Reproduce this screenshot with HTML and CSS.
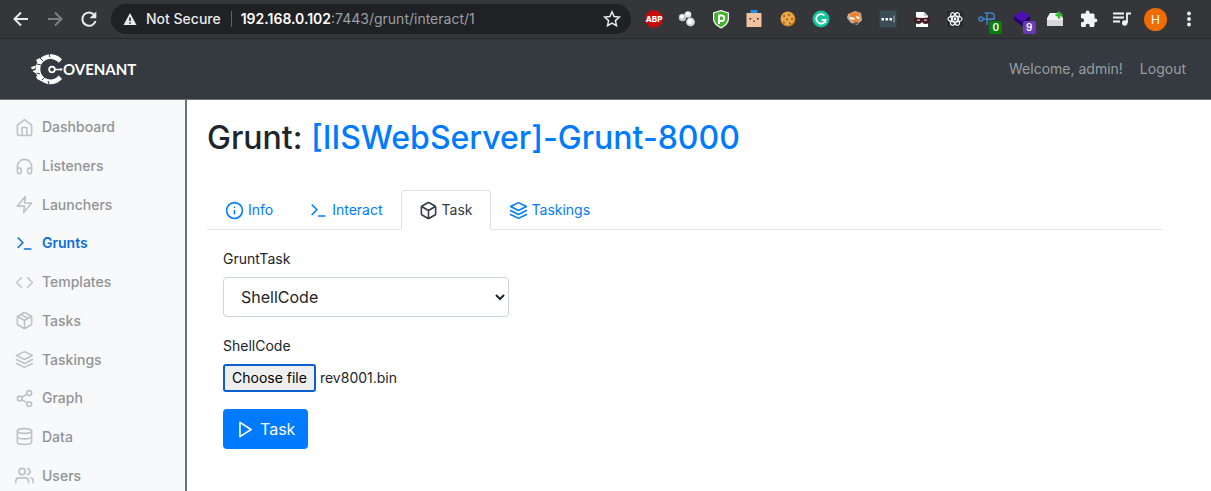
FILE: index.html
```
<!DOCTYPE html>
<html lang="en">
<head>
<meta charset="utf-8">
<title>Covenant</title>
<link rel="stylesheet" href="styles.css">
</head>
<body>
<svg class="sprite" aria-hidden="true">
  <symbol id="terminal" viewBox="0 0 24 24"><path d="M4 17l6-6-6-6M12 19h8"/></symbol>
  <symbol id="box" viewBox="0 0 24 24"><path d="M21 16V8a2 2 0 0 0-1-1.73l-7-4a2 2 0 0 0-2 0l-7 4A2 2 0 0 0 3 8v8a2 2 0 0 0 1 1.73l7 4a2 2 0 0 0 2 0l7-4A2 2 0 0 0 21 16zM3.27 6.96L12 12.01l8.73-5.05M12 22.08V12"/></symbol>
  <symbol id="layers" viewBox="0 0 24 24"><path d="M12 2L2 7l10 5 10-5-10-5zM2 17l10 5 10-5M2 12l10 5 10-5"/></symbol>
</svg>

<div class="browser">
  <div class="browser-nav">
    <button class="tool" aria-label="Back"><svg viewBox="0 0 20 20"><path d="M17 10H4M10 3.500l-6.500 6.500 6.500 6.500"/></svg></button>
    <button class="tool dim" aria-label="Forward"><svg viewBox="0 0 20 20"><path d="M3 10h13M10 3.500l6.500 6.500-6.500 6.500"/></svg></button>
    <button class="tool" aria-label="Reload"><svg viewBox="0 0 20 20"><path d="M15.500 6.200A6.700 6.700 0 1 0 16.500 12"/><path class="solid" d="M17.300 2.500v6.700h-6.700z"/></svg></button>
  </div>
  <div class="address">
    <svg class="warn" viewBox="0 0 14 14"><path fill="#e8eaed" d="M7 1l6.500 12H.5z"/><path stroke="#202124" stroke-width="1.500" d="M7 5.500v3.500M7 10.200v1.500"/></svg>
    <span class="secure">Not Secure</span>
    <span class="url"><b>192.168.0.102</b>:7443/grunt/interact/1</span>
    <button class="star" aria-label="Bookmark"><svg viewBox="0 0 20 20"><path stroke-width="1.500" d="M10 2.800l2.100 4.800 5.200.5-3.900 3.500 1.100 5.100L10 14l-4.500 2.700 1.100-5.100-3.900-3.500 5.200-.5z"/></svg></button>
  </div>
  <div class="extensions">
    <span class="ext"><svg viewBox="0 0 24 24"><path fill="#c70d0c" d="M8.500 3.500h7l5 5v7l-5 5h-7l-5-5v-7z"/><text x="12" y="15" class="abp">ABP</text></svg></span>
    <span class="ext"><svg viewBox="0 0 24 24"><circle cx="7.500" cy="10.500" r="3.700" fill="#c5c7c8"/><circle cx="13" cy="7.500" r="3.300" fill="#e1e1e1"/><circle cx="15.500" cy="15" r="4.400" fill="#d6d7d8"/><circle cx="7" cy="9.700" r="2" fill="#fff"/><circle cx="13" cy="7" r="1.800" fill="#fff"/><circle cx="15" cy="14.500" r="2.500" fill="#fff"/></svg></span>
    <span class="ext"><svg viewBox="0 0 24 24"><path fill="#fff" d="M12 3l8 2.500v6c0 5-4 8-8 10-4-2-8-5-8-10v-6z"/><path fill="#43b02a" d="M12 4.300l6.800 2v5.200c0 4-3.300 6.800-6.800 8.600-3.500-1.800-6.800-4.600-6.800-8.600V6.300z"/><path fill="none" stroke="#fff" stroke-width="2" d="M10 17V8.500h2.500a2.500 2.500 0 0 1 0 5.500H10"/></svg></span>
    <span class="ext"><svg viewBox="0 0 24 24"><path fill="#2490ee" d="M8.500 3h7v4h-7z"/><path fill="#f0c49f" d="M4.500 6h15v14h-15z"/><path fill="#222" d="M7.500 11h1.600v1.600H7.500zM15 11h1.600v1.600H15z"/><path fill="#8c4237" d="M11 13.500h2v1.300h-2z"/></svg></span>
    <span class="ext"><svg viewBox="0 0 24 24"><circle cx="12" cy="12" r="7.500" fill="#c98126"/><circle cx="11.500" cy="11.500" r="6.800" fill="#eba745"/><g fill="#855019"><circle cx="8" cy="9" r=".9"/><circle cx="13" cy="8" r=".9"/><circle cx="16" cy="12" r=".9"/><circle cx="11" cy="12.500" r=".9"/><circle cx="8" cy="15.500" r=".9"/><circle cx="14" cy="16.500" r=".9"/></g></svg></span>
    <span class="ext"><svg viewBox="0 0 24 24"><circle cx="12" cy="12" r="8.500" fill="#15c39a"/><path fill="none" stroke="#fff" stroke-width="1.800" d="M15.500 8.500A4.800 4.800 0 1 0 16.700 13h-4M16.300 13v3.300"/></svg></span>
    <span class="ext"><svg viewBox="0 0 24 24"><path fill="#b9b5b0" d="M5 7l7-3 6 2 1 7-5 5-6-2-4-5z"/><path fill="#ee8333" d="M7 6l9-1 2 6-4 5-7-3z"/><path fill="#fff" d="M7 10l5 1-1 2-4-1zM13 9l4 1-1 2h-2z"/><path fill="#6c4c39" d="M9 16l5-1 2 1-4 2z"/></svg></span>
    <span class="ext"><svg viewBox="0 0 24 24"><path fill="#3b4c57" d="M3.500 3.500h17v17h-17z"/><path fill="#fff" d="M5.500 11h2.500v2.500H5.500zM9.500 11H12v2.500H9.500zM13.500 11H16v2.500h-2.500z"/><path fill="#aab" d="M17.500 8.500h1v7h-1z"/></svg></span>
    <span class="ext"><svg viewBox="0 0 24 24"><path fill="#fff" d="M6 5h8l4 4v11H6z"/><path fill="#c8c8c8" d="M14 5v4h4z"/><path fill="#421c20" d="M4 10q8 2 16 0v4q-1 3-4.500 3-2.500 0-3.500-2-1 2-3.500 2-3.500 0-4.500-3z"/><path fill="#e3c0c0" d="M7 12.500h3v1.200H7zM14 12.500h3v1.200h-3z"/></svg></span>
    <span class="ext"><svg viewBox="0 0 24 24"><path fill="#292a2d" d="M4 4h16v16H4z"/><g fill="none" stroke="#f1f3f4" stroke-width="1.200"><ellipse cx="12" cy="12" rx="7" ry="2.800"/><ellipse cx="12" cy="12" rx="7" ry="2.800" transform="rotate(60 12 12)"/><ellipse cx="12" cy="12" rx="7" ry="2.800" transform="rotate(120 12 12)"/></g><circle cx="12" cy="12" r="1.400" fill="#fff"/></svg></span>
    <span class="ext"><svg viewBox="0 0 24 24"><g fill="none" stroke="#4082bd" stroke-width="1.500"><circle cx="5" cy="12" r="2"/><path d="M7 12h12M11 18V6M8.500 6H15a3 3 0 0 1 0 6.500h-3.500"/></g></svg><span class="badge green">0</span></span>
    <span class="ext"><svg viewBox="0 0 24 24"><path fill="#24006b" d="M4 9l8 6 8-6v4l-8 6-8-6z"/><path fill="#4a0fb5" d="M12 3.500L20 9l-8 6-8-6z"/></svg><span class="badge purple">9</span></span>
    <span class="ext"><svg viewBox="0 0 24 24"><path fill="#f1f1f1" d="M4 11l3-5h10l3 5v8H4z"/><path fill="#d8d8d8" d="M4 13h16v6H4z"/><path stroke="#31b82f" stroke-width="2.500" d="M16 4.500v7M12.500 8h7"/></svg></span>
    <span class="ext"><svg viewBox="0 0 24 24"><path fill="#f1f3f4" d="M18.500 11.500h-1V8c0-.8-.7-1.500-1.500-1.500h-3.500V5.300a1.900 1.900 0 0 0-3.800 0v1.200H5.300c-.8 0-1.300.7-1.300 1.500v3.200h1.100a2 2 0 0 1 0 4H4v3.300c0 .8.500 1.500 1.300 1.500h3.400v-1.200a2 2 0 0 1 4 0V20H16c.8 0 1.500-.7 1.500-1.500v-3.300h1a1.850 1.850 0 0 0 0-3.700z"/></svg></span>
    <span class="ext"><svg viewBox="0 0 24 24"><path stroke="#f1f3f4" stroke-width="1.800" d="M3 6.500h11M3 10.500h11M3 14.500h7M17 16V6.500h4"/><circle cx="14.700" cy="16" r="2.700" fill="#f1f3f4"/></svg></span>
    <span class="ext"><span class="avatar">H</span></span>
    <span class="ext"><svg viewBox="0 0 24 24"><g fill="#f1f3f4"><circle cx="12" cy="6.500" r="1.900"/><circle cx="12" cy="12" r="1.900"/><circle cx="12" cy="17.500" r="1.900"/></g></svg></span>
  </div>
</div>

<header class="navbar">
  <a class="brand" href="#" aria-label="Covenant">
    <svg viewBox="0 0 32 32"><path fill="#fff" d="M31 6.500A15 15 0 1 0 31 26l-3.300-3.500a10.300 10.300 0 1 1 0-12.700z"/><path fill="none" stroke="#343a40" d="M9 5l3 3M6 11l4 1M6 20l3 1M11 27l3-3M17 28l1 3M18 1l1 3"/><path fill="#fff" d="M0 14l5-1.500-1 3-3 1zM1.500 18l3.500-1v3.500zM5 7l3.500-2 1 3-3 1.500zM5 23l4 1 1 4-4-2z"/><circle cx="21" cy="16.500" r="2.800" fill="none" stroke="#fff" stroke-width="1.800"/><path stroke="#fff" stroke-width="1.500" d="M24 16.500h5"/><circle cx="30" cy="16.500" r="1.200" fill="#fff"/></svg>
    <span>OVENANT</span>
  </a>
  <nav class="account"><a href="#">Welcome, admin!</a><a href="#">Logout</a></nav>
</header>

<div class="layout">
  <nav class="sidebar">
    <ul>
      <li><a href="#"><svg class="icon" viewBox="0 0 24 24"><path d="M3 9l9-7 9 7v11a2 2 0 0 1-2 2H5a2 2 0 0 1-2-2zM9 22V12h6v10"/></svg>Dashboard</a></li>
      <li><a href="#"><svg class="icon" viewBox="0 0 24 24"><path d="M3 18v-6a9 9 0 0 1 18 0v6M21 19a2 2 0 0 1-2 2h-1a2 2 0 0 1-2-2v-3a2 2 0 0 1 2-2h3zM3 19a2 2 0 0 0 2 2h1a2 2 0 0 0 2-2v-3a2 2 0 0 0-2-2H3z"/></svg>Listeners</a></li>
      <li><a href="#"><svg class="icon" viewBox="0 0 24 24"><path d="M13 2L3 14h9l-1 8 10-12h-9z"/></svg>Launchers</a></li>
      <li><a href="#" class="active"><svg class="icon"><use href="#terminal"/></svg>Grunts</a></li>
      <li><a href="#"><svg class="icon" viewBox="0 0 24 24"><path d="M16 18l6-6-6-6M8 6l-6 6 6 6"/></svg>Templates</a></li>
      <li><a href="#"><svg class="icon" viewBox="0 0 24 24"><path d="M16.500 9.400L7.500 4.210M21 16V8a2 2 0 0 0-1-1.730l-7-4a2 2 0 0 0-2 0l-7 4A2 2 0 0 0 3 8v8a2 2 0 0 0 1 1.730l7 4a2 2 0 0 0 2 0l7-4A2 2 0 0 0 21 16zM3.270 6.960L12 12.010l8.730-5.050M12 22.080V12"/></svg>Tasks</a></li>
      <li><a href="#"><svg class="icon"><use href="#layers"/></svg>Taskings</a></li>
      <li><a href="#"><svg class="icon" viewBox="0 0 24 24"><circle cx="18" cy="5" r="3"/><circle cx="6" cy="12" r="3"/><circle cx="18" cy="19" r="3"/><path d="M8.590 13.510l6.830 3.980M15.410 6.510l-6.820 3.980"/></svg>Graph</a></li>
      <li><a href="#"><svg class="icon" viewBox="0 0 24 24"><ellipse cx="12" cy="5" rx="9" ry="3"/><path d="M21 12c0 1.660-4 3-9 3s-9-1.340-9-3M3 5v14c0 1.660 4 3 9 3s9-1.340 9-3V5"/></svg>Data</a></li>
      <li><a href="#"><svg class="icon" viewBox="0 0 24 24"><path d="M17 21v-2a4 4 0 0 0-4-4H5a4 4 0 0 0-4 4v2M23 21v-2a4 4 0 0 0-3-3.870M16 3.130a4 4 0 0 1 0 7.750"/><circle cx="9" cy="7" r="4"/></svg>Users</a></li>
    </ul>
  </nav>

  <main class="content">
    <h1>Grunt: <a href="#">[IISWebServer]-Grunt-8000</a></h1>
    <nav class="tabs">
      <a href="#"><svg class="icon" viewBox="0 0 24 24"><circle cx="12" cy="12" r="10"/><path d="M12 16v-4M12 8h.01"/></svg>Info</a>
      <a href="#"><svg class="icon"><use href="#terminal"/></svg>Interact</a>
      <a href="#" class="current"><svg class="icon"><use href="#box"/></svg>Task</a>
      <a href="#"><svg class="icon"><use href="#layers"/></svg>Taskings</a>
    </nav>
    <form class="task-form">
      <label for="grunt-task">GruntTask</label>
      <div class="select-wrap">
        <select id="grunt-task"><option>ShellCode</option></select>
        <svg class="chevron" viewBox="0 0 12 8"><path d="M2 2l4 4 4-4"/></svg>
      </div>
      <label for="choose">ShellCode</label>
      <div class="file"><button type="button" id="choose">Choose file</button><span>rev8001.bin</span></div>
      <button type="submit" class="submit"><svg class="icon" viewBox="0 0 24 24"><path d="M5 3l14 9-14 9z"/></svg>Task</button>
    </form>
  </main>
</div>
</body>
</html>
```
FILE: styles.css
```
* { box-sizing: border-box; }
body {
  margin: 0;
  min-height: 100vh;
  display: flex;
  flex-direction: column;
  background: #fff;
  color: #212529;
  font: 14px/20px Inter, "Liberation Sans", sans-serif;
}
a { color: inherit; text-decoration: none; }
button, select { font: inherit; color: inherit; }
.sprite { display: none; }
.icon {
  width: 19px;
  height: 19px;
  flex: none;
  fill: none;
  stroke: currentColor;
  stroke-width: 2;
  stroke-linecap: round;
  stroke-linejoin: round;
}

/* Browser toolbar */
.browser {
  display: flex;
  align-items: center;
  height: 39px;
  padding: 0 10px 0 11px;
  background: #35363a;
  border-bottom: 1px solid #27282b;
}
.browser-nav { display: flex; gap: 14px; margin-right: 12px; }
.tool, .star { border: 0; padding: 0; background: none; color: #e8eaed; height: 20px; width: 20px; }
.tool.dim { color: #7d7f83; }
.tool svg, .star svg {
  display: block;
  width: 20px;
  height: 20px;
  fill: none;
  stroke: currentColor;
  stroke-width: 2;
}
.tool .solid { fill: currentColor; stroke: none; }
.address {
  flex: 1;
  display: flex;
  align-items: center;
  height: 30px;
  padding: 0 9px 0 12px;
  border-radius: 15px;
  background: #202124;
  color: #e8eaed;
  white-space: nowrap;
}
.warn { width: 14px; height: 14px; margin-right: 9px; }
.secure { padding-right: 10px; border-right: 1px solid #5f6368; line-height: 16px; font-weight: 500; }
.url { padding-left: 9px; color: #9aa0a6; }
.url b { font-weight: 600; color: #fff; }
.star { margin-left: auto; }
.extensions { display: flex; justify-content: space-between; width: 559px; margin-left: 11px; }
.ext { position: relative; display: grid; place-items: center; width: 24px; height: 24px; }
.ext > svg { width: 24px; height: 24px; fill: none; }
.abp { fill: #fff; font-size: 8px; font-weight: 800; text-anchor: middle; }
.badge {
  position: absolute;
  right: -2px;
  bottom: -3px;
  width: 13px;
  height: 13px;
  border-radius: 2px;
  color: #fff;
  font-size: 10px;
  font-weight: 600;
  line-height: 13px;
  text-align: center;
}
.green { background: #078007; }
.purple { background: #673ab7; }
.avatar {
  width: 23px;
  height: 23px;
  border-radius: 50%;
  background: #ef6c00;
  color: #fff;
  font-size: 12px;
  line-height: 23px;
  text-align: center;
}

/* Application header */
.navbar {
  display: flex;
  align-items: center;
  justify-content: space-between;
  height: 61px;
  padding: 0 25px 0 31px;
  background: #343a40;
  border-bottom: 1px solid #6e7277;
}
.brand { display: flex; align-items: center; color: #fff; font: 700 15px/20px Lato, sans-serif; }
.brand svg { width: 32px; height: 32px; }
.account { display: flex; gap: 17px; color: #9a9da0; }

/* Page body */
.layout { flex: 1; display: flex; }
.sidebar { width: 187px; flex: none; padding-top: 8px; background: #f8f9fa; border-right: 2px solid #6e7277; }
.sidebar ul {
  display: grid;
  grid-template-rows: repeat(10, 1fr);
  min-height: 387px;
  margin: 0 0 -4px;
  padding: 0;
  list-style: none;
}
.sidebar a {
  display: flex;
  align-items: center;
  gap: 8px;
  height: 100%;
  padding-left: 15px;
  color: #919497;
  font-weight: 500;
}
.sidebar .icon { color: #bfc1c3; }
.sidebar .active, .sidebar .active .icon { color: #0b6ddd; }
.sidebar .active { font-weight: 600; }
.content { flex: 1; padding: 18px 49px 0 20px; }
h1 { margin: 0 0 32px; font-size: 32px; line-height: 40px; font-weight: 500; }
h1 a, .tabs a { color: #007bff; }
.tabs { display: flex; height: 40px; border-bottom: 1px solid #dee2e6; }
.tabs a {
  display: flex;
  align-items: center;
  gap: 4px;
  height: 40px;
  padding: 0 17px;
  border: 1px solid transparent;
  border-radius: 4px 4px 0 0;
}
.tabs .current { color: #343a40; border-color: #dee2e6 #dee2e6 #fff; }
.task-form { display: flex; flex-direction: column; align-items: flex-start; padding: 19px 16px; }
.task-form label { margin-bottom: 8px; }
.select-wrap { position: relative; width: 31%; margin-bottom: 19px; }
.select-wrap select {
  appearance: none;
  display: block;
  width: 100%;
  height: 40px;
  padding: 0 17px;
  border: 1px solid #ced4da;
  border-radius: 4px;
  background: #fff;
  font-size: 16px;
}
.chevron {
  position: absolute;
  right: 3px;
  top: 16px;
  width: 12px;
  height: 8px;
  fill: none;
  stroke: #212529;
  stroke-width: 2;
  pointer-events: none;
}
.file { display: flex; align-items: center; gap: 4px; margin-bottom: 17px; }
.file button {
  height: 28px;
  padding: 0 7px;
  border: 2px solid #0b5fd0;
  border-radius: 3px;
  background: #efefef;
  color: #000;
}
.submit {
  display: flex;
  align-items: center;
  gap: 5px;
  height: 40px;
  padding: 0 13px;
  border: 0;
  border-radius: 4px;
  background: #007bff;
  color: #fff;
  font-size: 16px;
}
```
